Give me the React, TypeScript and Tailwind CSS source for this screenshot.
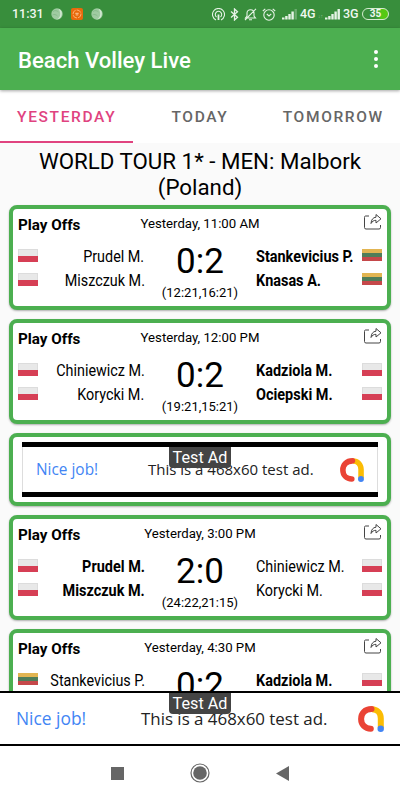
import React, { useState } from "react";

type Country = "pl" | "lt";

interface Team {
  players: string[];
  country: Country;
}

interface Match {
  id: number;
  time: string;
  home: Team;
  away: Team;
  score: string;
  sets: string;
  winner: "home" | "away";
}

const matches: Match[] = [
  {
    id: 1,
    time: "Yesterday, 11:00 AM",
    home: { players: ["Prudel M.", "Miszczuk M."], country: "pl" },
    away: { players: ["Stankevicius P.", "Knasas A."], country: "lt" },
    score: "0:2",
    sets: "(12:21,16:21)",
    winner: "away",
  },
  {
    id: 2,
    time: "Yesterday, 12:00 PM",
    home: { players: ["Chiniewicz M.", "Korycki M."], country: "pl" },
    away: { players: ["Kadziola M.", "Ociepski M."], country: "pl" },
    score: "0:2",
    sets: "(19:21,15:21)",
    winner: "away",
  },
  {
    id: 3,
    time: "Yesterday, 3:00 PM",
    home: { players: ["Prudel M.", "Miszczuk M."], country: "pl" },
    away: { players: ["Chiniewicz M.", "Korycki M."], country: "pl" },
    score: "2:0",
    sets: "(24:22,21:15)",
    winner: "home",
  },
  {
    id: 4,
    time: "Yesterday, 4:30 PM",
    home: { players: ["Stankevicius P."], country: "lt" },
    away: { players: ["Kadziola M."], country: "pl" },
    score: "0:2",
    sets: "",
    winner: "away",
  },
];

function Flag({ country }: { country: Country }) {
  if (country === "lt") {
    return (
      <div className="flex h-[13px] w-5 shrink-0 flex-col">
        <div className="flex-1 bg-[#e2b552]" />
        <div className="flex-1 bg-[#4f7d59]" />
        <div className="flex-1 bg-[#c5484a]" />
      </div>
    );
  }
  return (
    <div className="flex h-[13px] w-5 shrink-0 flex-col border border-b-0 border-[#dcdcdc]">
      <div className="flex-1 bg-[#e8e8e8]" />
      <div className="-mx-px flex-1 bg-[#d63f55]" />
    </div>
  );
}

function Signal({ weakLast = false }: { weakLast?: boolean }) {
  return (
    <svg width="16" height="12" viewBox="0 0 16 12" fill="#e6f3e6">
      <rect x="0" y="9.5" width="2.5" height="2" />
      <rect x="3.2" y="8" width="2.4" height="3.5" />
      <rect x="6.3" y="6" width="2.4" height="5.5" />
      <rect x="9.4" y="3.5" width="2.4" height="8" />
      <rect x="12.5" y="1" width="2.4" height="10.5" opacity={weakLast ? 0.3 : 1} />
    </svg>
  );
}

function Ball() {
  return (
    <svg width="12" height="12" viewBox="0 0 12 12">
      <circle cx="6" cy="6" r="5.7" fill="#9fcba1" />
      <path d="M7.5 .7A5.6 5.6 0 0 1 5 11.4C9.5 10.5 10.5 5 7.5 .7Z" fill="#d3e8d3" />
      <path d="M2 3.5C4 2 6 2.5 7.5 4M1.5 7C3 6 5 6.5 6.5 8" stroke="#83b786" strokeWidth=".8" fill="none" />
    </svg>
  );
}

function StatusBar() {
  return (
    <div className="flex h-7 shrink-0 items-center bg-[#388e3c] pl-3 pr-[11px] text-[#f0f8f0]">
      <span className="w-[39px] whitespace-nowrap pt-px text-[12.5px] font-medium leading-none">11:31</span>
      <Ball />
      <svg className="ml-2" width="12" height="12" viewBox="0 0 12 12">
        <rect width="12" height="12" rx="2" fill="#e8690b" />
        <circle cx="6" cy="6" r="4" fill="none" stroke="#ffb070" strokeWidth="1" strokeDasharray="5 1" />
        <path d="M4.3 5.3H7.7M4.7 6.9H7.3" stroke="#ffd2a8" strokeWidth=".9" />
      </svg>
      <div className="ml-2">
        <Ball />
      </div>
      <div className="ml-auto flex items-center">
        <svg width="13" height="13" viewBox="0 0 13 13" fill="none" stroke="#e6f3e6" strokeWidth="1.1">
          <path d="M4 11.9A6 6 0 1 1 9 11.9" />
          <path d="M4.5 9A3.2 3.2 0 1 1 8.5 9" />
          <path d="M6.5 6.5V12" strokeWidth="1.8" />
        </svg>
        <svg className="ml-[5px]" width="9" height="13" viewBox="0 0 9 13" fill="none" stroke="#e6f3e6" strokeWidth="1.3">
          <path d="M1 3.5 7.5 9.2 4.5 12V1L7.5 3.8 1 9.5" />
        </svg>
        <svg className="ml-[5px]" width="13" height="13" viewBox="0 0 13 13" fill="none" stroke="#e6f3e6" strokeWidth="1.1">
          <path d="M1.5 10H11.5L10 8V5C10 3 8.5 1.7 6.5 1.7S3 3 3 5V8ZM5 11.8H8M12 .8 1 12" />
        </svg>
        <svg className="ml-[5px]" width="14" height="13" viewBox="0 0 14 13" fill="none" stroke="#e6f3e6" strokeWidth="1.1">
          <circle cx="7" cy="7" r="5.2" />
          <path d="M.8 3 3.3 .8M13.2 3 10.7 .8M4.8 6 7 8 9.3 5.8" />
        </svg>
        <div className="ml-1.5">
          <Signal weakLast />
        </div>
        <span className="ml-0.5 w-4 pt-px text-[12.5px] font-medium leading-none">4G</span>
        <span className="w-[9px] pt-1 text-center text-[5px] leading-none opacity-40">↓↑</span>
        <Signal />
        <span className="ml-0.5 w-[19px] pt-px text-[12.5px] font-medium leading-none">3G</span>
        <div className="flex h-3 w-[27px] items-center justify-center rounded-full border border-[#d5ecd0] bg-linear-to-r from-[#388e3c] from-50% to-[#55c912] to-75% text-[10px] font-bold leading-none">
          35
        </div>
      </div>
    </div>
  );
}

function ShareIcon() {
  return (
    <svg width="19" height="18" viewBox="0 0 19 18" fill="none" stroke="#444" strokeWidth="1" strokeLinejoin="round">
      <path d="M6 3H2.5Q1.5 3 1.5 4.5V14.5Q1.500 16 3 16H16Q17.500 16 17.500 14.500V12" />
      <path d="M8 10.5C8.3 6.5 10 4.5 13 4.2V1.5L18 5.8 13 10V7.3C10.5 7.3 9.2 8.5 8 10.5Z" />
    </svg>
  );
}

function TeamColumn({ team, bold, side }: { team: Team; bold: boolean; side: "home" | "away" }) {
  const home = side === "home";
  return (
    <div className="flex min-w-0 flex-1 basis-0 flex-col">
      {team.players.map((player) => (
        <div key={player} className={`flex h-6 items-center ${home ? "justify-end" : "flex-row-reverse justify-end"}`}>
          <Flag country={team.country} />
          <div className={`flex w-0 flex-1 pt-px ${home ? "justify-end" : "justify-start"}`}>
            <span
              className={`whitespace-nowrap text-[17px] leading-6 ${home ? "origin-right" : "origin-left"} ${
                bold ? "scale-x-[.85] font-bold" : "scale-x-[.845]"
              }`}
            >
              {player}
            </span>
          </div>
        </div>
      ))}
    </div>
  );
}

function MatchCard({ match }: { match: Match }) {
  return (
    <div className="h-[105px] shrink-0 rounded-lg border-4 border-[#4caf50] bg-white px-[5px] shadow-[0_1px_2px_rgba(0,0,0,0.3)]">
      <div className="flex h-[34px] items-start justify-between">
        <span className="w-20 pt-[7px] text-[15.2px] font-bold leading-[18px]">Play Offs</span>
        <span className="pt-[7px] text-[13.2px] leading-4">{match.time}</span>
        <div className="flex w-20 justify-end pt-1">
          <ShareIcon />
        </div>
      </div>
      <div className="flex">
        <TeamColumn team={match.home} bold={match.winner === "home"} side="home" />
        <div className="flex w-[111px] shrink-0 flex-col items-center">
          <span className="h-9 pt-px text-[35px] leading-9">{match.score}</span>
          <span className="mt-1.5 text-[13px] leading-4">{match.sets}</span>
        </div>
        <TeamColumn team={match.away} bold={match.winner === "away"} side="away" />
      </div>
    </div>
  );
}

function AdMobLogo({ size }: { size: number }) {
  return (
    <svg width={size} height={size} viewBox="0 0 26 26" fill="none">
      <path d="M14 3.2C19 3.2 22.8 7 22.8 12.5V22" stroke="#fbbc04" strokeWidth="6" />
      <path
        d="M13.5 3.1C7 3.1 3.1 7.5 3.1 13S7 22.7 12.8 22.7"
        stroke="#ea4335"
        strokeWidth="6"
        strokeLinecap="round"
      />
      <circle cx="22.7" cy="22.7" r="3.2" fill="#4285f4" />
    </svg>
  );
}

function TestAdLabel() {
  return (
    <div className="absolute left-1/2 top-0 h-[21px] w-[62px] -translate-x-1/2 rounded-b bg-[#444] text-center font-['Roboto',sans-serif] text-[16.2px] leading-[22px] text-white">
      Test Ad
    </div>
  );
}

const tabs = ["YESTERDAY", "TODAY", "TOMORROW"];

export default function App() {
  const [activeTab, setActiveTab] = useState(tabs[0]);

  return (
    <div className="flex h-[800px] w-[400px] flex-col overflow-hidden bg-[#fafafa] font-['Roboto',sans-serif] text-black">
      <StatusBar />
      <header className="z-10 flex h-[62px] shrink-0 items-center justify-between bg-[#4caf50] pl-[18px] pr-[22px] shadow-[0_1px_3px_rgba(0,0,0,0.35)]">
        <h1 className="pt-[3px] text-[22.1px] font-medium text-white">Beach Volley Live</h1>
        <div className="flex flex-col gap-[2.5px]">
          <div className="size-[4.5px] rounded-full bg-white" />
          <div className="size-[4.5px] rounded-full bg-white" />
          <div className="size-[4.5px] rounded-full bg-white" />
        </div>
      </header>

      <nav className="flex h-[53px] shrink-0 bg-white">
        {tabs.map((tab) => (
          <button
            key={tab}
            onClick={() => setActiveTab(tab)}
            className={`flex-1 border-b-2 pt-1 text-[15.5px] font-medium tracking-[1.65px] ${
              tab === activeTab ? "border-[#e0437f] text-[#e0437f]" : "border-transparent text-[#666]"
            }`}
          >
            {tab}
          </button>
        ))}
      </nav>

      <main className="flex min-h-0 flex-1 flex-col gap-[9px] overflow-hidden px-[9px]">
        <h2 className="h-[53px] shrink-0 pt-[5px] text-center text-[22.3px] leading-[26px]">
          WORLD TOUR 1* - MEN: Malbork
          <br />
          (Poland)
        </h2>
        <MatchCard match={matches[0]} />
        <MatchCard match={matches[1]} />
        <div className="h-[73px] shrink-0 rounded-lg border-4 border-[#4caf50] bg-white px-[9px] pt-[5px] shadow-[0_1px_2px_rgba(0,0,0,0.3)]">
          <div className="relative h-[55px] border-y-[5px] border-black font-['Open_Sans',sans-serif]">
            <div className="flex h-full items-center border-x border-[#ddd] px-[13px]">
              <span className="w-[112px] text-[15.4px] text-[#4285f4]">Nice job!</span>
              <span className="flex-1 whitespace-nowrap text-[15px] text-[#222]">This is a 468x60 test ad.</span>
              <AdMobLogo size={24} />
            </div>
            <TestAdLabel />
          </div>
        </div>
        <MatchCard match={matches[2]} />
        <MatchCard match={matches[3]} />
      </main>

      <div className="relative flex h-[55px] shrink-0 items-center border-y-2 border-black bg-white pl-4 pr-4 font-['Open_Sans',sans-serif]">
        <span className="w-[125px] text-[17.4px] text-[#4285f4]">Nice job!</span>
        <span className="flex-1 whitespace-nowrap text-[16.9px] text-[#222]">This is a 468x60 test ad.</span>
        <AdMobLogo size={26} />
        <TestAdLabel />
      </div>

      <footer className="flex h-[54px] shrink-0 items-center justify-center bg-white pr-px">
        <div className="size-[13px] bg-[#666]" />
        <svg className="mx-[66px]" width="20" height="20" viewBox="0 0 20 20">
          <circle cx="10" cy="10" r="9" fill="none" stroke="#666" strokeWidth="1.2" />
          <circle cx="10" cy="10" r="6.8" fill="#666" />
        </svg>
        <svg width="13" height="15" viewBox="0 0 13 15">
          <path d="M13 0V15L0 7.5Z" fill="#666" />
        </svg>
      </footer>
    </div>
  );
}
